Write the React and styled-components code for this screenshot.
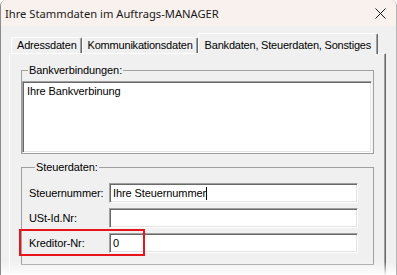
import styled, { createGlobalStyle } from 'styled-components';

const GlobalStyle = createGlobalStyle`
  html, body {
    margin: 0;
    padding: 0;
    background: #fff;
  }
  body {
    font-family: "Liberation Sans", Arial, sans-serif;
  }
`;

const Window = styled.div`
  position: relative;
  width: 397px;
  height: 275px;
  box-sizing: border-box;
  background: #f0f0f0;
  border-left: 1px solid #8c8c8c;
  border-right: 1px solid #b4b4b4;
  border-radius: 6px 6px 0 0;
  overflow: hidden;
`;

const TitleBar = styled.div`
  height: 26px;
  display: flex;
  align-items: center;
  justify-content: space-between;
  padding: 0 10px 0 4px;
  background: #f9f1ee;
  font-family: "Noto Sans", "Open Sans", sans-serif;
  font-size: 11.2px;
  color: #1a1a1a;
`;

const Close = styled.svg`
  width: 11px;
  height: 11px;
  margin-top: 1px;
`;

const Body = styled.div`
  padding: 7px 10px 0 8px;
`;

const TabRow = styled.div`
  display: flex;
  align-items: flex-end;
  height: 20px;
  padding-left: 2px;
`;

const Tab = styled.div`
  position: relative;
  z-index: ${(p) => (p.$active ? 2 : 1)};
  box-sizing: border-box;
  height: ${(p) => (p.$active ? '21px' : '16px')};
  margin-bottom: ${(p) => (p.$active ? '-1px' : '0')};
  padding: ${(p) => (p.$active ? '5px 6px 0 6px' : '1px 4px 0 5px')};
  background: #f0f0f0;
  border-top: 1px solid #fff;
  border-left: 1px solid #fff;
  border-right: 1px solid #696969;
  box-shadow: inset -1px 0 #a0a0a0;
  border-radius: 2px 2px 0 0;
  font-size: 11px;
  letter-spacing: -0.2px;
  line-height: 13px;
  color: #000;
  white-space: nowrap;
`;

const Panel = styled.div`
  box-sizing: border-box;
  height: 240px;
  border-top: 1px solid #fff;
  border-left: 1px solid #fff;
  border-right: 1px solid #696969;
  box-shadow: inset -1px 0 #a0a0a0;
  padding: 10px 11px 0 11px;
  display: flex;
  flex-direction: column;
  gap: 7px;
`;

const Group = styled.fieldset`
  margin: 0;
  min-width: 0;
  border: 1px solid #a0a0a0;
  padding: ${(p) => p.$pad};
`;

const Legend = styled.legend`
  margin-left: 6px;
  padding: 0 1px;
  font-size: 11px;
  letter-spacing: -0.1px;
  line-height: 13px;
  color: #000;
`;

const Memo = styled.div`
  box-sizing: border-box;
  height: 72px;
  margin-top: 4px;
  padding: 3px 4px;
  background: #fff;
  border-top: 1px solid #a0a0a0;
  border-left: 1px solid #a0a0a0;
  border-bottom: 1px solid #fff;
  border-right: 1px solid #fff;
  box-shadow: inset 1px 1px #696969, inset -1px -1px #e3e3e3;
  font-size: 11px;
  letter-spacing: -0.1px;
  line-height: 13px;
  color: #000;
`;

const Rows = styled.div`
  display: flex;
  flex-direction: column;
  gap: 5px;
  margin-top: 9px;
`;

const Row = styled.div`
  position: relative;
  display: grid;
  grid-template-columns: 80px 249px;
  align-items: center;
  font-size: 11px;
  letter-spacing: -0.1px;
  line-height: 13px;
  color: #000;

  &::after {
    content: '';
    display: ${(p) => (p.$marked ? 'block' : 'none')};
    position: absolute;
    left: -10px;
    top: -4px;
    width: 126px;
    height: 27px;
    box-sizing: border-box;
    border: 2px solid #e8141b;
  }
`;

const Field = styled.div`
  box-sizing: border-box;
  height: 20px;
  display: flex;
  align-items: center;
  padding: 0 3px;
  background: #fff;
  border-top: 1px solid #a0a0a0;
  border-left: 1px solid #a0a0a0;
  border-bottom: 1px solid #fff;
  border-right: 1px solid #fff;
  box-shadow: inset 1px 1px #696969, inset -1px -1px #e3e3e3;
`;

const Caret = styled.span`
  display: inline-block;
  width: 1px;
  height: 13px;
  background: #000;
`;

const Fade = styled.div`
  position: absolute;
  left: 0;
  right: 0;
  bottom: 0;
  height: 13px;
  background: linear-gradient(to bottom, rgba(255, 255, 255, 0), rgba(255, 255, 255, 0.95));
`;

export default function App() {
  return (
    <>
      <GlobalStyle />
      <Window>
        <TitleBar>
          <span>Ihre Stammdaten im Auftrags-MANAGER</span>
          <Close viewBox="0 0 11 11">
            <path d="M0.5 0.5 L10.5 10.5 M10.5 0.5 L0.5 10.5" stroke="#1a1a1a" strokeWidth="1" fill="none" />
          </Close>
        </TitleBar>
        <Body>
          <TabRow>
            <Tab>Adressdaten</Tab>
            <Tab>Kommunikationsdaten</Tab>
            <Tab $active>Bankdaten, Steuerdaten, Sonstiges</Tab>
          </TabRow>
          <Panel>
            <Group $pad="0 1px 0 0">
              <Legend>Bankverbindungen:</Legend>
              <Memo>Ihre Bankverbinung</Memo>
            </Group>
            <Group $pad="0 0 11px 7px">
              <Legend>Steuerdaten:</Legend>
              <Rows>
                <Row>
                  <span>Steuernummer:</span>
                  <Field>
                    Ihre Steuernummer
                    <Caret />
                  </Field>
                </Row>
                <Row>
                  <span>USt-Id.Nr:</span>
                  <Field />
                </Row>
                <Row $marked>
                  <span>Kreditor-Nr:</span>
                  <Field>0</Field>
                </Row>
              </Rows>
            </Group>
          </Panel>
        </Body>
        <Fade />
      </Window>
    </>
  );
}
